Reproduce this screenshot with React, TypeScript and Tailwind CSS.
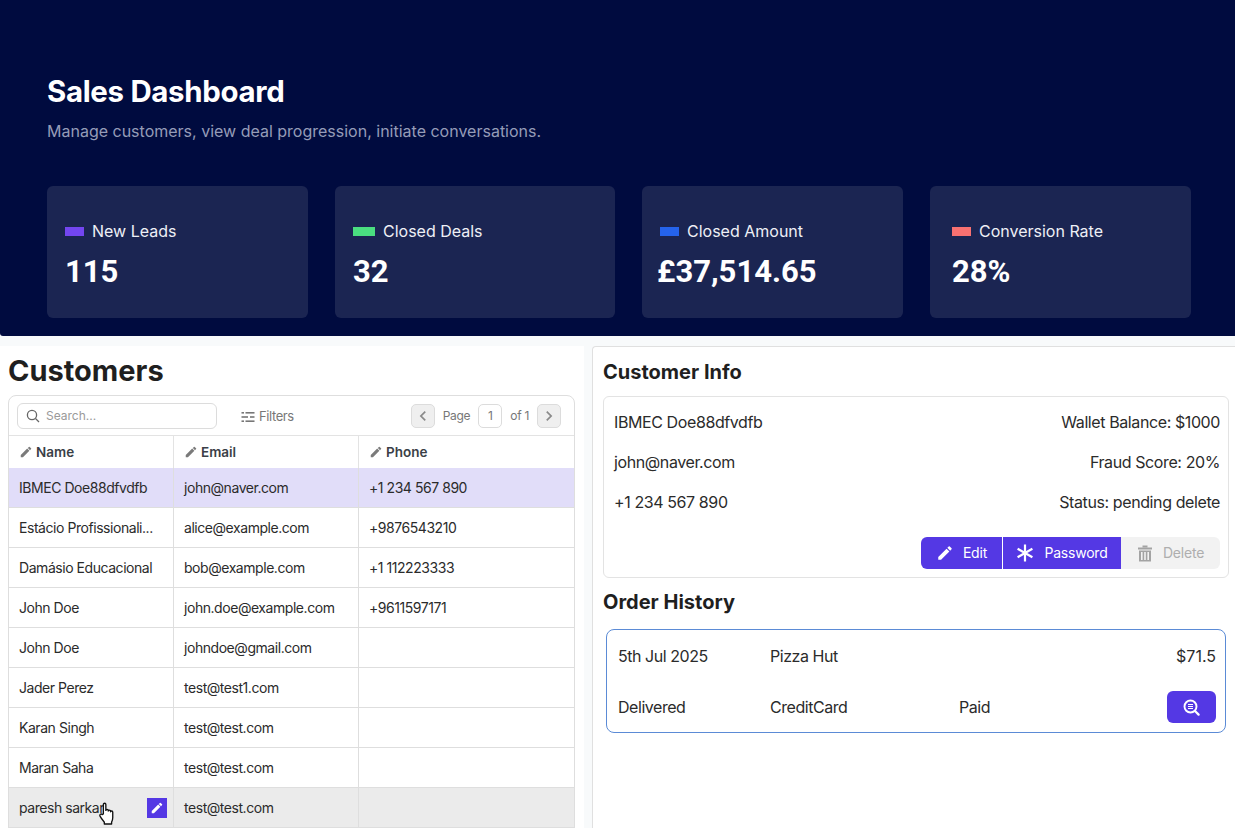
import { MdEdit, MdChevronLeft, MdChevronRight } from "react-icons/md";

const stats = [
  { label: "New Leads", value: "115", swatch: "bg-[#7346f0]", box: "w-[261px] pl-[18px]", swatchW: "w-[19px]" },
  { label: "Closed Deals", value: "32", swatch: "bg-[#4ade80]", box: "w-[280px] pl-[18px]", swatchW: "w-[22px]" },
  { label: "Closed Amount", value: "£37,514.65", swatch: "bg-[#2563eb]", box: "w-[261px] pl-[18px]", swatchW: "w-[19px]", valueShift: "ml-[-3px]" },
  { label: "Conversion Rate", value: "28%", swatch: "bg-[#f87171]", box: "w-[261px] pl-[22px]", swatchW: "w-[19px]" },
];

const customers = [
  { name: "IBMEC Doe88dfvdfb", email: "john@naver.com", phone: "+1 234 567 890", state: "selected" },
  { name: "Estácio Profissionali...", email: "alice@example.com", phone: "+9876543210" },
  { name: "Damásio Educacional", email: "bob@example.com", phone: "+1 112223333" },
  { name: "John Doe", email: "john.doe@example.com", phone: "+9611597171" },
  { name: "John Doe", email: "johndoe@gmail.com", phone: "" },
  { name: "Jader Perez", email: "test@test1.com", phone: "" },
  { name: "Karan Singh", email: "test@test.com", phone: "" },
  { name: "Maran Saha", email: "test@test.com", phone: "" },
  { name: "paresh sarkar", email: "test@test.com", phone: "", state: "hover" },
];

function HeaderCell({ label, className }: { label: string; className: string }) {
  return (
    <div className={`flex items-center gap-[3px] pl-[10px] text-[13.5px] font-semibold text-[#3a3f47] ${className}`}>
      <MdEdit className="text-[14px] text-[#7a7a7a]" />
      {label}
    </div>
  );
}

function FilterIcon() {
  return (
    <svg width="14" height="14" viewBox="0 0 14 14" fill="#777">
      <rect x="0.5" y="2" width="2.5" height="1.6" />
      <rect x="4.5" y="2" width="9" height="1.6" />
      <rect x="0.5" y="6.2" width="6.5" height="1.6" />
      <rect x="9" y="6.2" width="4.5" height="1.6" />
      <rect x="0.5" y="10.4" width="2.5" height="1.6" />
      <rect x="4.5" y="10.4" width="9" height="1.6" />
    </svg>
  );
}

function TrashIcon() {
  return (
    <svg width="16" height="17" viewBox="0 0 16 17" fill="#a3a3a3">
      <rect x="5.5" y="0.5" width="5" height="2" />
      <rect x="1" y="2.5" width="14" height="2" />
      <path d="M2 5.5h12v11H2zM4 7v8h1.6V7zm3.2 0v8h1.6V7zm3.2 0v8H12V7z" fillRule="evenodd" />
    </svg>
  );
}

function AsteriskIcon() {
  return (
    <svg width="18" height="18" viewBox="0 0 18 18" stroke="white" strokeWidth="2.2">
      <path d="M9 0.5v17M1.6 4.75l14.8 8.5M16.4 4.75l-14.8 8.5" />
    </svg>
  );
}

function OrderSearchIcon() {
  return (
    <svg width="17" height="17" viewBox="0 0 17 17" fill="none">
      <circle cx="7.5" cy="7.5" r="6" stroke="white" strokeWidth="1.9" />
      <path d="M12 12l3.6 3.6" stroke="white" strokeWidth="2.2" strokeLinecap="round" />
      <path d="M5 5.5h5M5 7.5h5M5 9.5h5" stroke="white" strokeWidth="1.2" />
    </svg>
  );
}

function HandCursor() {
  return (
    <svg width="18" height="23" viewBox="0 0 18 24" className="absolute left-[89px] top-[14px]">
      <path
        d="M5.2 12.5V2.6c0-1.7 2.6-1.7 2.6 0v6.2c0-1.5 2.5-1.5 2.5 0v.7c0-1.4 2.4-1.4 2.4 0v.8c0-1.3 2.3-1.2 2.3.3v5.6c0 2.3-.5 3.5-1.2 4.8v2H6.2v-2c-1.3-1.6-3-3.6-4.5-6.3-.9-1.7 1.2-3 2.3-1.6z"
        fill="white"
        stroke="#111"
        strokeWidth="1.4"
        strokeLinejoin="round"
      />
    </svg>
  );
}

function PageButton({ children }: { children: React.ReactNode }) {
  return (
    <span className="flex h-[24px] w-[24px] items-center justify-center rounded-[5px] border border-[#dcdcdc] bg-[#efefef] text-[20px] text-[#8a8a8a]">
      {children}
    </span>
  );
}

export default function App() {
  return (
    <div className="flex h-[828px] w-[1235px] flex-col overflow-hidden bg-[#f8fafb] font-['Inter',sans-serif] text-[#1f1f1f]">
      <header className="flex h-[336px] shrink-0 flex-col rounded-bl-[3px] bg-[#000b3f] pl-[47px] pt-[74px]">
        <h1 className="text-[29.4px] leading-[36px] font-bold tracking-[-0.3px] text-white">Sales Dashboard</h1>
        <p className="mt-[9px] text-[16px] leading-[24px] text-[#959cb8]">
          Manage customers, view deal progression, initiate conversations.
        </p>
        <div className="mt-[43px] flex gap-[27px]">
          {stats.map((stat) => (
            <div key={stat.label} className={`h-[132px] rounded-[6px] bg-[#1b2552] pt-[33px] ${stat.box}`}>
              <div className="flex items-center gap-[8px] text-[16px] leading-[24px] text-[#eef0f6]">
                <span className={`h-[9px] ${stat.swatchW} ${stat.swatch}`} />
                {stat.label}
              </div>
              <div className={`mt-[10px] font-['Roboto',sans-serif] text-[31px] leading-[38px] font-bold text-white ${stat.valueShift ?? ""}`}>
                {stat.value}
              </div>
            </div>
          ))}
        </div>
      </header>

      <main className="mt-[10px] flex min-h-0 flex-1 gap-[8px]">
        <section className="w-[584px] shrink-0 bg-white pl-[8px]">
          <h2 className="text-[29px] leading-[49px] font-bold">Customers</h2>
          <div className="w-[567px] rounded-t-[8px] border border-[#dedede]">
            <div className="flex h-[40px] items-center border-b border-[#e3e3e3] pl-[8px] pr-[13px]">
              <div className="flex h-[26px] w-[200px] items-center gap-[6px] rounded-[6px] border border-[#dcdcdc] pl-[8px] text-[12px] text-[#9a9a9a]">
                <svg width="14" height="14" viewBox="0 0 14 14" fill="none" stroke="#666" strokeWidth="1.3">
                  <circle cx="6" cy="6" r="4.6" />
                  <path d="M9.5 9.5l3.5 3.5" />
                </svg>
                Search...
              </div>
              <div className="ml-[24px] mt-[2px] flex items-center gap-[4px] text-[13px] tracking-[-0.4px] text-[#777]">
                <FilterIcon />
                Filters
              </div>
              <div className="ml-auto flex items-center gap-[8px] text-[12px] tracking-[-0.3px] text-[#777]">
                <PageButton><MdChevronLeft /></PageButton>
                <span>Page</span>
                <span className="flex h-[24px] w-[24px] items-center justify-center rounded-[5px] border border-[#dcdcdc]">1</span>
                <span>of 1</span>
                <PageButton><MdChevronRight /></PageButton>
              </div>
            </div>
            <div className="flex h-[32px]">
              <HeaderCell label="Name" className="w-[165px] border-r border-[#e3e3e3]" />
              <HeaderCell label="Email" className="w-[185px] border-r border-[#e3e3e3]" />
              <HeaderCell label="Phone" className="flex-1" />
            </div>
            {customers.map((row, index) => (
              <div
                key={index}
                className={`flex h-[40px] border-b border-[#dedede] text-[14px] tracking-[-0.45px] text-[#2b2b2b] ${
                  row.state === "selected" ? "bg-[#e1ddf9]" : row.state === "hover" ? "bg-[#ebebeb]" : "bg-white"
                }`}
              >
                <div className="relative flex w-[165px] items-center border-r border-[#dedede] pl-[10px]">
                  {row.name}
                  {row.state === "hover" && (
                    <>
                      <span className="absolute left-[138px] top-[10px] flex h-[20px] w-[20px] items-center justify-center bg-[#5438e4] text-[14px] text-white">
                        <MdEdit />
                      </span>
                      <HandCursor />
                    </>
                  )}
                </div>
                <div className="flex w-[185px] items-center border-r border-[#dedede] pl-[10px]">{row.email}</div>
                <div className="flex flex-1 items-center pl-[10px]">{row.phone}</div>
              </div>
            ))}
          </div>
        </section>

        <section className="flex-1 rounded-tl-[4px] border-t border-l border-[#e0e0e0] bg-white pl-[10px] pr-[6px]">
          <h2 className="h-[49px] text-[20px] leading-[51px] font-bold">Customer Info</h2>
          <div className="rounded-[6px] border border-[#e3e3e3] pb-[8px] pt-[5px]">
            <div className="flex flex-col pl-[10px] pr-[8px] text-[16px] leading-[40px] tracking-[-0.4px] text-[#2b2b2b]">
              <div className="flex justify-between"><span>IBMEC Doe88dfvdfb</span><span>Wallet Balance: $1000</span></div>
              <div className="flex justify-between"><span>john@naver.com</span><span>Fraud Score: 20%</span></div>
              <div className="flex justify-between"><span>+1 234 567 890</span><span>Status: pending delete</span></div>
            </div>
            <div className="mt-[15px] flex justify-end pr-[8px] text-[14px] leading-[32px] tracking-[-0.2px] text-white">
              <button className="flex w-[81px] items-center justify-center gap-[9px] rounded-l-[6px] bg-[#5438e4]">
                <MdEdit className="text-[18px]" />Edit
              </button>
              <button className="ml-px flex w-[118px] items-center justify-center gap-[10px] bg-[#5438e4]">
                <AsteriskIcon />Password
              </button>
              <button className="flex w-[99px] items-center justify-center gap-[10px] rounded-r-[6px] bg-[#f2f2f2] text-[#aeaeae]">
                <TrashIcon />Delete
              </button>
            </div>
          </div>
          <h2 className="mt-[4px] text-[20px] leading-[40px] font-bold">Order History</h2>
          <div className="ml-[3px] mr-[3px] mt-[7px] rounded-[8px] border border-[#5b8bd6] pl-[10px] pr-[9px] text-[16px] tracking-[-0.45px] text-[#2b2b2b]">
            <div className="flex h-[52px] items-center">
              <span className="w-[153px] pl-[1px]">5th Jul 2025</span>
              <span>Pizza Hut</span>
              <span className="ml-auto tracking-normal">$71.5</span>
            </div>
            <div className="flex h-[50px] items-center">
              <span className="w-[153px] pl-[1px]">Delivered</span>
              <span className="w-[189px]">CreditCard</span>
              <span>Paid</span>
              <button className="ml-auto flex h-[32px] w-[49px] items-center justify-center rounded-[6px] bg-[#5438e4]">
                <OrderSearchIcon />
              </button>
            </div>
          </div>
        </section>
      </main>
    </div>
  );
}
